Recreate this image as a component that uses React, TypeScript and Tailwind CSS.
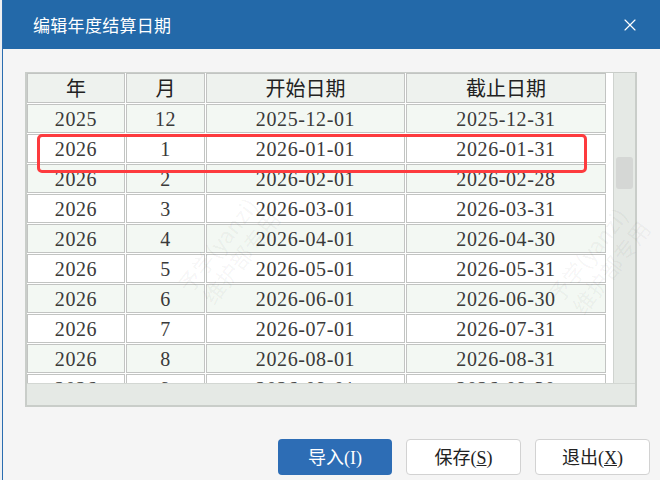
import { X } from 'lucide-react'

type Row = { y: number; m: number; start: string; end: string }

const rows: Row[] = [
  { y: 2025, m: 12, start: '2025-12-01', end: '2025-12-31' },
  { y: 2026, m: 1, start: '2026-01-01', end: '2026-01-31' },
  { y: 2026, m: 2, start: '2026-02-01', end: '2026-02-28' },
  { y: 2026, m: 3, start: '2026-03-01', end: '2026-03-31' },
  { y: 2026, m: 4, start: '2026-04-01', end: '2026-04-30' },
  { y: 2026, m: 5, start: '2026-05-01', end: '2026-05-31' },
  { y: 2026, m: 6, start: '2026-06-01', end: '2026-06-30' },
  { y: 2026, m: 7, start: '2026-07-01', end: '2026-07-31' },
  { y: 2026, m: 8, start: '2026-08-01', end: '2026-08-31' },
  { y: 2026, m: 9, start: '2026-09-01', end: '2026-09-30' },
]

const cellFont = { fontFamily: '"Liberation Serif", "Noto Sans CJK SC", serif' }
const cjk = { fontFamily: '"Noto Sans CJK SC", "Liberation Sans", sans-serif' }

function Cell({ children, odd, head }: { children: React.ReactNode; odd?: boolean; head?: boolean }) {
  return (
    <div
      className={
        'flex items-center justify-center border border-[#c2c4c2] text-[20px] ' +
        (head ? 'h-[30px] bg-[#eef2ee] text-[#222]' : 'h-[29px] text-[#3a3a3a] tracking-[0.6px] ' + (odd ? 'bg-[#f3f8f3]' : 'bg-white'))
      }
    >
      {children}
    </div>
  )
}

function Watermark({ className }: { className: string }) {
  return (
    <div
      className={'pointer-events-none absolute whitespace-nowrap -rotate-[52deg] text-[22px] leading-[26px] text-black/[0.05] ' + className}
      style={cjk}
    >
      <div>予学(yanzi)</div>
      <div className="pl-[6px]">维护部专用</div>
    </div>
  )
}

export default function App() {
  return (
    <div className="relative w-[660px] h-[480px] overflow-hidden flex bg-[#eef0f2]">
      <div className="w-[2px] shrink-0" />
      <div className="flex-1 flex flex-col border-l border-[#2a6db0]">
        {/* 标题栏 */}
        <div className="h-[49px] shrink-0 bg-[#2369a9] flex items-center justify-between pl-[30px] pr-[20px]">
          <span className="text-white text-[17px] tracking-[0.3px]" style={cjk}>编辑年度结算日期</span>
          <X className="text-white" size={20} strokeWidth={1.4} />
        </div>

        <div className="flex-1 bg-[#f5f5f5] pl-[22px] pt-[23px]">
          {/* 表格 */}
          <div className="w-[612px] border-2 border-t border-[#c9cdc9] bg-[#e5e9e5]" style={cellFont}>
            <div className="flex h-[310px]">
              <div className="w-[586px] overflow-hidden bg-white">
                <div className="grid grid-cols-[98px_79px_199px_200px_6px] gap-px bg-white">
                  <Cell head><span style={cjk}>年</span></Cell>
                  <Cell head><span style={cjk}>月</span></Cell>
                  <Cell head><span style={cjk}>开始日期</span></Cell>
                  <Cell head><span style={cjk}>截止日期</span></Cell>
                  <div className="bg-white" />
                  {rows.map((r, i) => [
                    <Cell key={'y' + i} odd={i % 2 === 0}>{r.y}</Cell>,
                    <Cell key={'m' + i} odd={i % 2 === 0}>{r.m}</Cell>,
                    <Cell key={'s' + i} odd={i % 2 === 0}>{r.start}</Cell>,
                    <Cell key={'e' + i} odd={i % 2 === 0}>{r.end}</Cell>,
                    <div key={'x' + i} className="bg-white" />,
                  ])}
                </div>
              </div>
              <div className="w-[22px] border-l border-[#cfd3cf] bg-[#e5e9e5] pt-[84px] px-[2px]">
                <div className="h-[32px] rounded-[3px] bg-[#d5d7d5]" />
              </div>
            </div>
            <div className="h-[22px] border-t border-[#d3d7d3] bg-[#e5e9e5]" />
          </div>

          {/* 按钮 */}
          <div className="flex justify-end gap-[14px] pr-[10px] mt-[32px]" style={cjk}>
            <button className="w-[114px] h-[36px] rounded-[4px] bg-[#2d6db5] text-white text-[18px]">
              导入<span style={cellFont}>(I)</span>
            </button>
            <button className="w-[115px] h-[36px] rounded-[4px] border border-[#d2d2d2] bg-white text-[#222] text-[18px]">
              保存<span style={cellFont}>(<span className="underline">S</span>)</span>
            </button>
            <button className="w-[115px] h-[36px] rounded-[4px] border border-[#d2d2d2] bg-white text-[#222] text-[18px]">
              退出<span style={cellFont}>(<span className="underline">X</span>)</span>
            </button>
          </div>
        </div>
      </div>

      {/* 水印 */}
      <Watermark className="left-[170px] top-[225px]" />
      <Watermark className="left-[540px] top-[235px]" />

      {/* 红框标注 */}
      <div className="pointer-events-none absolute left-[37px] top-[134px] w-[550px] h-[39px] border-[3px] border-[#fd3b3e] rounded-[5px]" />
    </div>
  )
}
